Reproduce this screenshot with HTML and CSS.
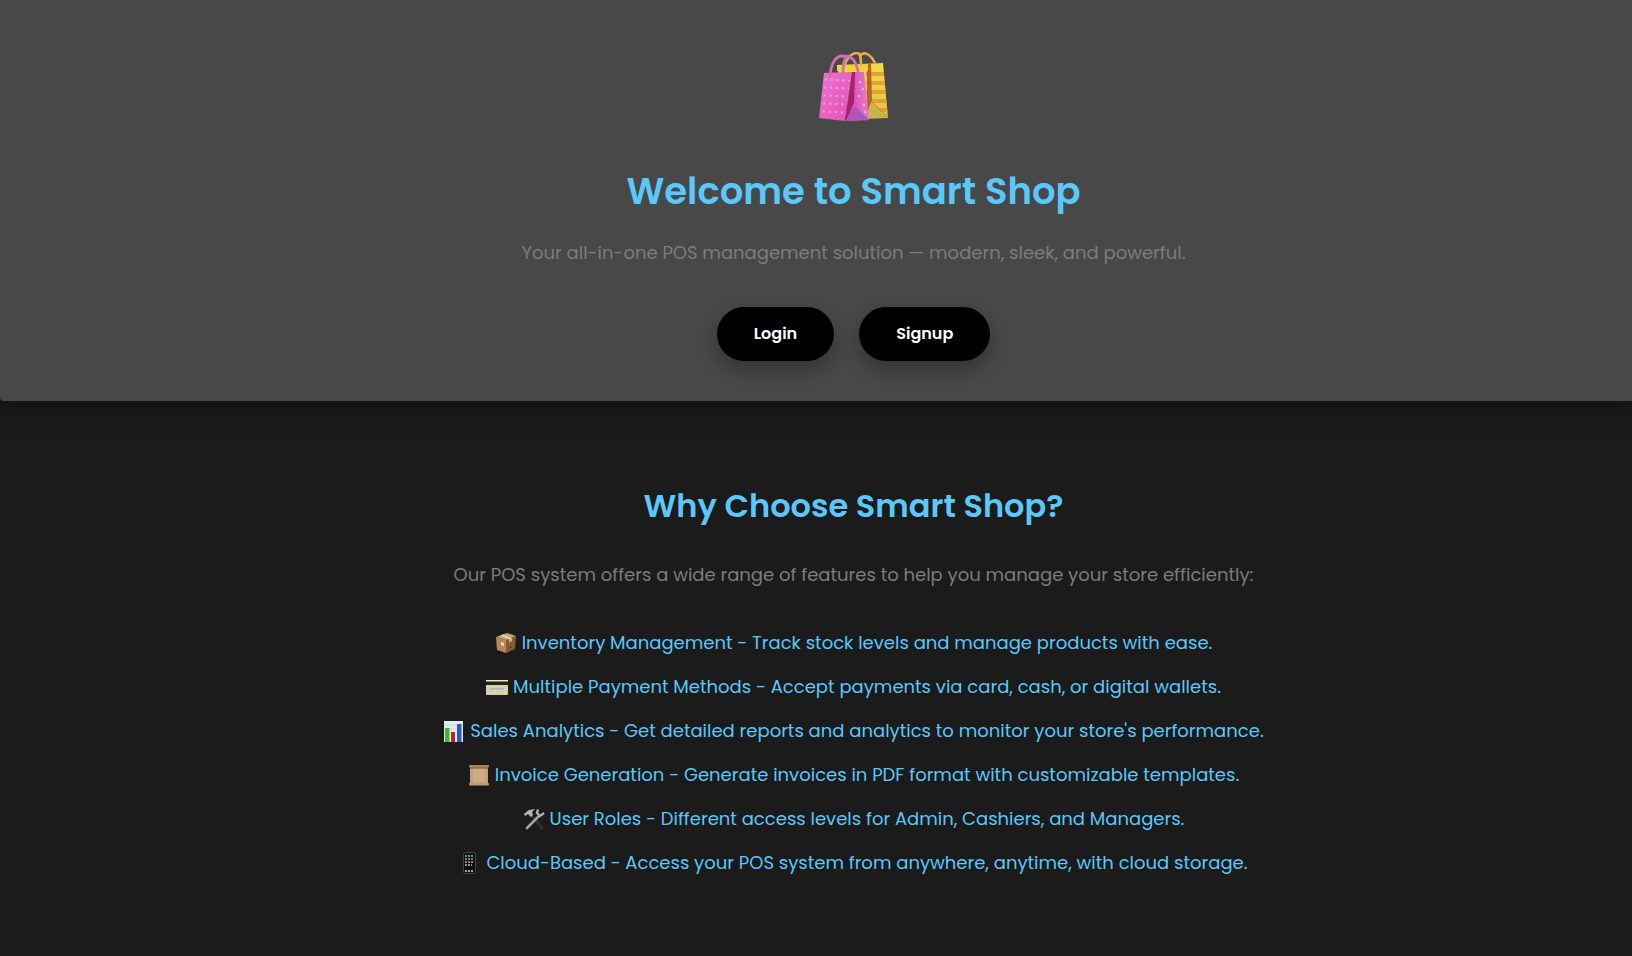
FILE: index.html
```html
<!DOCTYPE html>
<html lang="en">
<head>
<meta charset="utf-8">
<title>Smart Shop</title>
<meta name="viewport" content="width=device-width, initial-scale=1">
<link rel="stylesheet" href="styles.css">
</head>
<body>
<header class="hero">
  <svg class="hero-logo" viewBox="0 0 72 72" role="img" aria-label="Shopping bags">
    <defs>
      <linearGradient id="pink" x1="0" y1="0" x2="1" y2="1"><stop offset="0" stop-color="#ee74cf"/><stop offset="1" stop-color="#e650b6"/></linearGradient>
      <linearGradient id="side" x1="0" y1="0" x2="1" y2="0"><stop offset="0" stop-color="#a8246e"/><stop offset=".35" stop-color="#dc55b4"/><stop offset="1" stop-color="#e878ce"/></linearGradient>
      <linearGradient id="gold" x1="0" y1="0" x2="0" y2="1"><stop offset="0" stop-color="#f3dc48"/><stop offset="1" stop-color="#e0c24a"/></linearGradient>
      <pattern id="dots" width="6" height="8" patternUnits="userSpaceOnUse" patternTransform="rotate(3)"><circle cx="3" cy="3" r="1.100" fill="#fbb5ea"/></pattern>
      <clipPath id="bag"><path d="M19 13 65 11 70 66 28 67Z"/></clipPath>
    </defs>
    <path d="M19 13 65 11 70 66 28 67Z" fill="url(#gold)"/>
    <g clip-path="url(#bag)">
      <path d="M48 22h24M48 31h24M48 40h24M48 49h24M48 58h24" stroke="#e2a035" stroke-width="4"/>
      <path d="M49 12 53 11 54 49 49 60Z" fill="#b9622a"/>
      <path d="M53 50 70 66 48 68Z" fill="#c9b444"/>
      <path d="M53 49 70 65" stroke="#cd832c"/>
    </g>
    <path d="M19 14 50 12v7H19Z" fill="#f0d235"/>
    <path d="M26 14C30 4 35 1 39 1s4 6 4 13M42 4C45-1 52 1 57 11" fill="none" stroke="#e5ad4a" stroke-width="2.600"/>
    <path d="M6 21 34 20 27 69 1 66Z" fill="url(#pink)"/>
    <path d="M7 23 33 22 26 67 3 65Z" fill="url(#dots)"/>
    <path d="M34 20 46 20 51 68 27 69Z" fill="url(#side)"/>
    <path d="M34 20 37 20 36 51 27 69Z" fill="#a4216c"/>
    <path d="M37 54 27 69 51 68Z" fill="#b354bd"/>
    <path d="M37 54 51 67" stroke="#d067c8"/>
    <g fill="#f9b4e6"><circle cx="42" cy="30" r="1.300"/><circle cx="41" cy="44" r="1.300"/><circle cx="46" cy="53" r="1.300"/><circle cx="45" cy="37" r="1.200"/><circle cx="47" cy="60" r="1.200"/></g>
    <path d="M12 24C13 11 18 4 24 4 30 4 37 4 40 19M25 24C25 12 26 5 30 4" fill="none" stroke="#d070b0" stroke-width="2.800" stroke-linecap="round"/>
  </svg>
  <h1 class="hero-title">Welcome to Smart Shop</h1>
  <p class="lead">Your all-in-one POS management solution — modern, sleek, and powerful.</p>
  <div class="actions">
    <button class="btn" type="button">Login</button>
    <button class="btn" type="button">Signup</button>
  </div>
</header>
<main class="features">
  <h2 class="features-title">Why Choose Smart Shop?</h2>
  <p class="lead">Our POS system offers a wide range of features to help you manage your store efficiently:</p>
  <ul class="feature-list">
    <li class="feature">
      <svg class="icon" viewBox="0 0 22 22" aria-hidden="true"><path d="M1 5 11 8V21L2 18Z" fill="#b98655"/><path d="M11 8 21 4 20 17 11 21Z" fill="#855a32"/><path d="M1 5 12 1 21 4 11 8Z" fill="#c99f72"/><path d="M5 3.500 8 2.500 17 6 14 7.500Z" fill="#e6cfb4"/><path d="M14 7 17 5.500V9L14 10.500Z" fill="#cdb294"/><path d="M6 10 9 11V14L6 13Z" fill="#e9dfd0"/><path d="M14 16 17 14.500" stroke="#51351d"/></svg>
      <span>Inventory Management - Track stock levels and manage products with ease.</span>
    </li>
    <li class="feature">
      <svg class="icon" viewBox="0 0 22 22" aria-hidden="true"><rect y="4" width="22" height="15" rx="1" fill="#d9d1a0"/><rect y="4" width="22" height="1.500" fill="#f1edca"/><rect y="5.500" width="22" height="3.500" fill="#24221c"/><rect x="2" y="11" width="18" height="4" fill="#cfcfc3"/><path d="M3 13h4l1-1 2 1 2-1 2 1h4" fill="none" stroke="#a3a8b8"/></svg>
      <span>Multiple Payment Methods - Accept payments via card, cash, or digital wallets.</span>
    </li>
    <li class="feature">
      <svg class="icon" viewBox="0 0 22 22" aria-hidden="true"><rect x="1" y="1" width="19" height="21" fill="#e4eaf3"/><path d="M1 5h19M1 9h19M1 13h19" stroke="#c2cbd9" stroke-width=".6"/><rect x="2" y="8" width="4.500" height="14" fill="#43b62e"/><rect x="8" y="12" width="4" height="10" fill="#bd2424"/><rect x="14" y="4" width="4.500" height="18" fill="#2b5bc0"/></svg>
      <span>Sales Analytics - Get detailed reports and analytics to monitor your store's performance.</span>
    </li>
    <li class="feature">
      <svg class="icon" viewBox="0 0 22 22" aria-hidden="true"><path d="M2 3H20L20 20H2Z" fill="#c4a078"/><path d="M5 4H17V18H5Z" fill="#cdac84"/><rect x="1" y="1" width="20" height="2.500" rx="1" fill="#a98662"/><path d="M2 4H20" stroke="#745434"/><rect x="1" y="19" width="20" height="2.500" rx="1" fill="#bf9a6d"/></svg>
      <span>Invoice Generation - Generate invoices in PDF format with customizable templates.</span>
    </li>
    <li class="feature">
      <svg class="icon" viewBox="0 0 22 22" aria-hidden="true"><path d="M8 7 19 20" stroke="#303030" stroke-width="3" stroke-linecap="round"/><path d="M16 8 4 20" stroke="#a4a0a6" stroke-width="2.600" stroke-linecap="round"/><path d="M15 1.500 14 5 17 8 21 5" fill="none" stroke="#b1adb3" stroke-width="2.400"/><path d="M1 6 6 2 12 1 9 4 10 7 8 9 5 6 2 8Z" fill="#b8b6bc"/></svg>
      <span>User Roles - Different access levels for Admin, Cashiers, and Managers.</span>
    </li>
    <li class="feature">
      <svg class="icon" viewBox="0 0 22 22" aria-hidden="true"><rect x="4.500" y=".5" width="12" height="21" rx="2" fill="#101010" stroke="#444"/><path d="M6 4h9" stroke="#5c9a72" stroke-width="1.800" stroke-dasharray="2 1"/><path d="M6 7h9" stroke="#5b87a9" stroke-width="1.800" stroke-dasharray="2 1"/><path d="M6 10h9" stroke="#b07b5d" stroke-width="1.800" stroke-dasharray="2 1"/><path d="M6 13h7" stroke="#6a9db0" stroke-width="1.800" stroke-dasharray="2 1"/><path d="M6 19h9" stroke="#7fbe8c" stroke-width="1.800" stroke-dasharray="2 1"/></svg>
      <span>Cloud-Based - Access your POS system from anywhere, anytime, with cloud storage.</span>
    </li>
  </ul>
</main>
</body>
</html>
```
FILE: styles.css
```css
* {
  box-sizing: border-box;
}

body {
  margin: 0;
  min-height: 100vh;
  background: #1b1b1b;
  color: #5ac8fa;
  font-family: Poppins, Inter, sans-serif;
  font-size: 18px;
  line-height: 28px;
  text-align: center;
}

.hero,
.features {
  display: flex;
  flex-direction: column;
  align-items: center;
  padding-left: 75px;
}

.hero {
  padding-top: 52px;
  padding-bottom: 40px;
  background: #484848;
  border-bottom-left-radius: 4px;
  box-shadow: 0 0 28px 10px rgba(0, 0, 0, 0.32);
}

.hero-logo {
  width: 72px;
  height: 72px;
}

.hero-title,
.features-title {
  margin: 0;
  font-weight: 600;
}

.hero-title {
  margin-top: 39px;
  font-size: 37px;
  line-height: 56px;
}

.lead {
  margin: 0;
  color: #7c7c7c;
}

.hero .lead {
  margin-top: 20px;
}

.actions {
  display: flex;
  gap: 25px;
  margin-top: 40px;
}

.btn {
  padding: 13px 37px;
  border: 0;
  border-radius: 27px;
  background: #000;
  color: #fff;
  font: inherit;
  font-size: 16px;
  font-weight: 600;
  box-shadow: 0 8px 20px rgba(0, 0, 0, 0.3);
  cursor: pointer;
}

.features {
  padding-top: 80px;
  padding-bottom: 64px;
}

.features-title {
  font-size: 32px;
  line-height: 50px;
}

.features .lead {
  margin-top: 30px;
}

.feature-list {
  display: grid;
  gap: 16px;
  margin: 40px 0 0;
  padding: 0;
  list-style: none;
}

.feature {
  display: flex;
  align-items: center;
  justify-content: center;
  gap: 5px;
}

.icon {
  width: 22px;
  height: 22px;
}
```
